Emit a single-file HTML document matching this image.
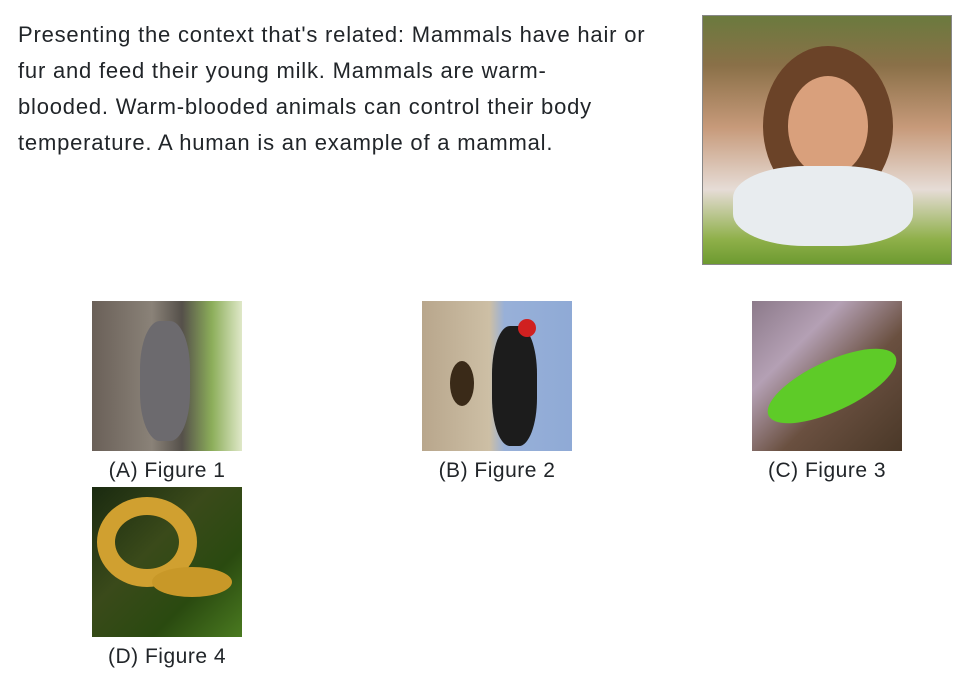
<!DOCTYPE html>
<html><head><meta charset="utf-8"><style>
body{margin:0;background:#fff;width:972px;height:683px;overflow:hidden;font-family:"Liberation Sans",sans-serif;color:#212529;position:relative}
.t{position:absolute;left:18px;top:17px;font-size:22px;line-height:36px;letter-spacing:0.8px;white-space:nowrap}
.img{position:absolute;width:150px;height:150px}
.cap{position:absolute;width:150px;text-align:center;font-size:21px;line-height:24px;letter-spacing:0.5px}
</style></head><body>
<div class="t">Presenting the context that's related: Mammals have hair or<br>fur and feed their young milk. Mammals are warm-<br>blooded. Warm-blooded animals can control their body<br>temperature. A human is an example of a mammal.</div>
<div style="position:absolute;left:702px;top:15px;width:248px;height:248px;border:1px solid #888;background:linear-gradient(180deg,#6b7a3e 0%,#8a7048 20%,#c79a7a 45%,#e6dcd6 70%,#8fb04a 90%,#6d9a30 100%)">
<div style="position:absolute;left:60px;top:30px;width:130px;height:160px;border-radius:50%;background:#6b4328"></div>
<div style="position:absolute;left:85px;top:60px;width:80px;height:100px;border-radius:50%;background:#d9a07c"></div>
<div style="position:absolute;left:30px;top:150px;width:180px;height:80px;border-radius:40%;background:#e8ecef"></div>
</div>
<div class="img" style="left:92px;top:301px;background:linear-gradient(90deg,#6a6058 0%,#8a8278 40%,#55504a 60%,#8cae5a 80%,#dfe8c8 100%)"><div style="position:absolute;left:48px;top:20px;width:50px;height:120px;border-radius:40%;background:#6c6a6e"></div></div>
<div class="cap" style="left:92px;top:459px">(A) Figure 1</div>
<div class="img" style="left:422px;top:301px;background:linear-gradient(90deg,#b8a68c 0%,#cdbfa5 45%,#98b0d8 55%,#8faad6 100%)"><div style="position:absolute;left:28px;top:60px;width:24px;height:45px;border-radius:50%;background:#3a2a18"></div><div style="position:absolute;left:70px;top:25px;width:45px;height:120px;border-radius:40%;background:#1c1c1c"></div><div style="position:absolute;left:96px;top:18px;width:18px;height:18px;border-radius:50%;background:#d02020"></div></div>
<div class="cap" style="left:422px;top:459px">(B) Figure 2</div>
<div class="img" style="left:752px;top:301px;background:linear-gradient(135deg,#8c7a8a 0%,#b4a0b4 30%,#6a5040 60%,#4a3828 100%)"><div style="position:absolute;left:10px;top:60px;width:140px;height:50px;border-radius:50%;background:#5ecb28;transform:rotate(-25deg)"></div></div>
<div class="cap" style="left:752px;top:459px">(C) Figure 3</div>
<div class="img" style="left:92px;top:487px;background:linear-gradient(135deg,#1a2a10 0%,#3a4a1a 40%,#2a4a10 70%,#4a7a20 100%)"><div style="position:absolute;left:5px;top:10px;width:100px;height:90px;border-radius:50%;border:18px solid #d0a030;box-sizing:border-box"></div><div style="position:absolute;left:60px;top:80px;width:80px;height:30px;border-radius:50%;background:#c89828"></div></div>
<div class="cap" style="left:92px;top:645px">(D) Figure 4</div>
</body></html>
